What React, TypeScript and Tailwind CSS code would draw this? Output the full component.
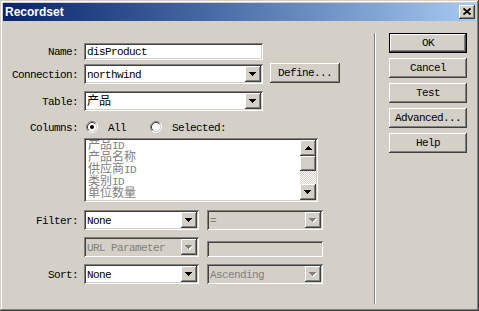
import React from "react";

const raised =
  "shadow-[inset_-1px_-1px_0_#404040,inset_1px_1px_0_#ffffff,inset_-2px_-2px_0_#808080,inset_2px_2px_0_#d4d0c8]";
const sunken =
  "shadow-[inset_1px_1px_0_#808080,inset_-1px_-1px_0_#ffffff,inset_2px_2px_0_#404040,inset_-2px_-2px_0_#d4d0c8]";
const defBtn =
  "shadow-[inset_0_0_0_1px_#000000,inset_-2px_-2px_0_#404040,inset_2px_2px_0_#ffffff,inset_-3px_-3px_0_#808080,inset_3px_3px_0_#d4d0c8]";

function DownArrow({ disabled = false }: { disabled?: boolean }) {
  const tri = (dx: number, dy: number, c: string) => (
    <g fill={c}>
      <rect x={0 + dx} y={0 + dy} width={7} height={1} />
      <rect x={1 + dx} y={1 + dy} width={5} height={1} />
      <rect x={2 + dx} y={2 + dy} width={3} height={1} />
      <rect x={3 + dx} y={3 + dy} width={1} height={1} />
    </g>
  );
  return (
    <svg width="8" height="5" viewBox="0 0 8 5" shapeRendering="crispEdges">
      {disabled ? (
        <>
          {tri(1, 1, "#ffffff")}
          {tri(0, 0, "#808080")}
        </>
      ) : (
        tri(0, 0, "#000000")
      )}
    </svg>
  );
}

function UpArrow() {
  return (
    <svg width="7" height="4" viewBox="0 0 7 4" shapeRendering="crispEdges">
      <g fill="#000">
        <rect x={3} y={0} width={1} height={1} />
        <rect x={2} y={1} width={3} height={1} />
        <rect x={1} y={2} width={5} height={1} />
        <rect x={0} y={3} width={7} height={1} />
      </g>
    </svg>
  );
}

function Radio({ checked }: { checked: boolean }) {
  return (
    <svg width="12" height="12" viewBox="0 0 12 12">
      <circle cx="6" cy="6" r="4.2" fill="#ffffff" />
      <path d="M9.89 2.11 A5.5 5.5 0 0 0 2.11 9.89" stroke="#808080" strokeWidth="1" fill="none" />
      <path d="M2.11 9.89 A5.5 5.5 0 0 0 9.89 2.11" stroke="#ffffff" strokeWidth="1" fill="none" />
      <path d="M9.18 2.82 A4.5 4.5 0 0 0 2.82 9.18" stroke="#404040" strokeWidth="1" fill="none" />
      <path d="M2.82 9.18 A4.5 4.5 0 0 0 9.18 2.82" stroke="#d4d0c8" strokeWidth="1" fill="none" />
      {checked && <circle cx="6" cy="6" r="2" fill="#000000" />}
    </svg>
  );
}

function Combo({
  className,
  children,
  disabled = false,
}: {
  className: string;
  children?: React.ReactNode;
  disabled?: boolean;
}) {
  return (
    <div
      className={`flex h-[20px] p-[2px] ${sunken} ${
        disabled ? "bg-[#d4d0c8] text-[#808080]" : "bg-white text-black"
      } ${className}`}
    >
      <div className="flex flex-1 items-center overflow-hidden whitespace-nowrap pl-[1px] pt-[2px]">{children}</div>
      <div className={`flex w-[16px] items-center justify-center bg-[#d4d0c8] ${raised}`}>
        <DownArrow disabled={disabled} />
      </div>
    </div>
  );
}

function Label({ children }: { children: React.ReactNode }) {
  return <div className="w-[75px] whitespace-nowrap pt-[2px] text-right">{children}</div>;
}

function Cjk({ children }: { children: React.ReactNode }) {
  return <span className="text-[12px] leading-[12px] tracking-normal">{children}</span>;
}

function Btn({ children, isDefault = false }: { children: React.ReactNode; isDefault?: boolean }) {
  return (
    <div
      className={`flex h-[20px] w-[78px] items-center justify-center bg-[#d4d0c8] pt-[1px] text-black ${
        isDefault ? defBtn : raised
      }`}
    >
      {children}
    </div>
  );
}

export default function App() {
  return (
    <div
      className={`w-[479px] h-[311px] bg-[#d4d0c8] p-[3px] flex flex-col text-[11px] tracking-[-0.6px] text-black [font-family:'Liberation_Mono','Noto_Sans_CJK_SC',monospace] shadow-[inset_-1px_-1px_0_#404040,inset_1px_1px_0_#d4d0c8,inset_-2px_-2px_0_#808080,inset_2px_2px_0_#ffffff]`}
    >
      {/* Title bar */}
      <div className="flex h-[18px] items-center justify-between bg-linear-to-r from-[#0a246a] to-[#a6caf0] pl-[2px] pr-[1px]">
        <span className="[font-family:'Liberation_Sans',Arial,sans-serif] text-[12px] font-bold tracking-normal text-white">
          Recordset
        </span>
        <div className={`flex h-[14px] w-[16px] items-center justify-center bg-[#d4d0c8] ${raised}`}>
          <svg width="8" height="7" viewBox="0 0 8 7" className="-mt-[1px] -ml-[1px]">
            <path d="M0.5 0.5 L7.5 6.5 M7.5 0.5 L0.5 6.5" stroke="#000" strokeWidth="1.8" />
          </svg>
        </div>
      </div>

      {/* Body */}
      <div className="flex flex-1">
        {/* Left panel */}
        <div className="flex w-[371px] flex-col pt-[22px]">
          <div className="flex h-[17px] items-center gap-[6px]">
            <Label>Name:</Label>
            <div className={`flex h-[17px] w-[179px] items-center bg-white pl-[3px] pt-[2px] ${sunken}`}>
              disProduct
            </div>
          </div>

          <div className="mt-[4px] flex h-[20px] items-center gap-[6px]">
            <Label>Connection:</Label>
            <Combo className="w-[179px]">northwind</Combo>
            <div className="ml-[1px] -mt-[2px]">
              <div className={`flex h-[20px] w-[70px] items-center justify-center bg-[#d4d0c8] pt-[1px] ${raised}`}>
                Define...
              </div>
            </div>
          </div>

          <div className="mt-[7px] flex h-[20px] items-center gap-[6px]">
            <Label>Table:</Label>
            <Combo className="w-[179px]">
              <Cjk>产品</Cjk>
            </Combo>
          </div>

          <div className="mt-[10px] flex h-[12px] items-center gap-[6px]">
            <Label>Columns:</Label>
            <div className="ml-[2px] flex items-center">
              <Radio checked />
              <span className="ml-[10px] pt-[2px]">All</span>
              <span className="ml-[24px] flex">
                <Radio checked={false} />
              </span>
              <span className="ml-[10px] pt-[2px]">Selected:</span>
            </div>
          </div>

          <div className="mt-[5px] flex">
            <div className="w-[81px]" />
            <div className={`flex h-[64px] w-[234px] bg-white p-[2px] ${sunken}`}>
              <div className="flex flex-1 flex-col overflow-hidden pl-[2px] text-[#808080]">
                <div className="h-[12px] leading-[12px]">
                  <Cjk>产品</Cjk>ID
                </div>
                <div className="h-[12px] leading-[12px]">
                  <Cjk>产品名称</Cjk>
                </div>
                <div className="h-[12px] leading-[12px]">
                  <Cjk>供应商</Cjk>ID
                </div>
                <div className="h-[12px] leading-[12px]">
                  <Cjk>类别</Cjk>ID
                </div>
                <div className="h-[12px] leading-[12px]">
                  <Cjk>单位数量</Cjk>
                </div>
              </div>
              <div className="flex w-[16px] flex-col">
                <div className={`flex h-[16px] items-center justify-center bg-[#d4d0c8] ${raised}`}>
                  <UpArrow />
                </div>
                <div className={`h-[15px] bg-[#d4d0c8] ${raised}`} />
                <div className="flex-1 bg-[image:conic-gradient(#ffffff_25%,#d4d0c8_0_50%,#ffffff_0_75%,#d4d0c8_0)] bg-[length:2px_2px]" />
                <div className={`flex h-[16px] items-center justify-center bg-[#d4d0c8] ${raised}`}>
                  <DownArrow />
                </div>
              </div>
            </div>
          </div>

          <div className="mt-[8px] flex h-[20px] items-center gap-[6px]">
            <Label>Filter:</Label>
            <Combo className="w-[115px]">None</Combo>
            <Combo className="ml-[2px] w-[116px]" disabled>
              =
            </Combo>
          </div>

          <div className="mt-[7px] flex h-[20px] items-end gap-[6px]">
            <div className="w-[75px]" />
            <Combo className="w-[115px]" disabled>
              URL Parameter
            </Combo>
            <div className={`ml-[2px] h-[16px] w-[116px] bg-[#d4d0c8] ${sunken}`} />
          </div>

          <div className="mt-[7px] flex h-[20px] items-center gap-[6px]">
            <Label>Sort:</Label>
            <Combo className="w-[115px]">None</Combo>
            <Combo className="ml-[2px] w-[116px]" disabled>
              Ascending
            </Combo>
          </div>
        </div>

        {/* Separator */}
        <div className="mt-[12px] h-[271px] w-[2px] bg-white shadow-[inset_1px_0_0_#808080]" />

        {/* Right buttons */}
        <div className="ml-[13px] flex flex-col gap-[5px] pt-[12px]">
          <Btn isDefault>OK</Btn>
          <Btn>Cancel</Btn>
          <Btn>Test</Btn>
          <Btn>Advanced...</Btn>
          <Btn>Help</Btn>
        </div>
      </div>
    </div>
  );
}
